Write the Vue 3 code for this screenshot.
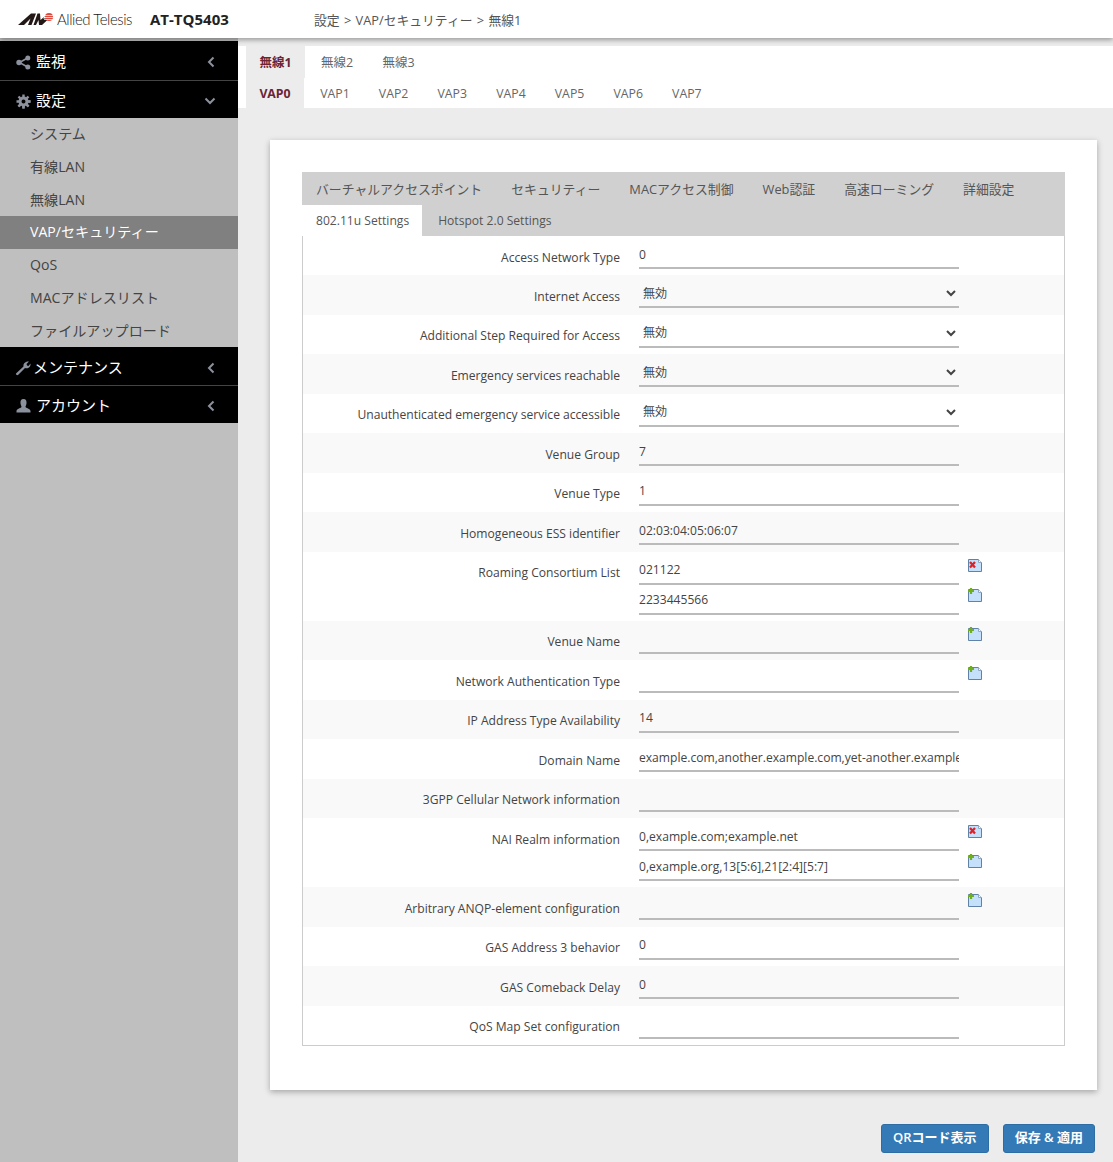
<script setup>
import { ref } from 'vue'

const subMenu = ['システム', '有線LAN', '無線LAN', 'VAP/セキュリティー', 'QoS', 'MACアドレスリスト', 'ファイルアップロード']
const radios = ['無線1', '無線2', '無線3']
const vaps = ['VAP0', 'VAP1', 'VAP2', 'VAP3', 'VAP4', 'VAP5', 'VAP6', 'VAP7']
const mainTabs = ['バーチャルアクセスポイント', 'セキュリティー', 'MACアクセス制御', 'Web認証', '高速ローミング', '詳細設定']

const activeRadio = ref(0)
const activeVap = ref(0)

const rows = [
  { label: 'Access Network Type', inputs: ['0'] },
  { label: 'Internet Access', select: true },
  { label: 'Additional Step Required for Access', select: true },
  { label: 'Emergency services reachable', select: true },
  { label: 'Unauthenticated emergency service accessible', select: true },
  { label: 'Venue Group', inputs: ['7'] },
  { label: 'Venue Type', inputs: ['1'] },
  { label: 'Homogeneous ESS identifier', inputs: ['02:03:04:05:06:07'] },
  { label: 'Roaming Consortium List', inputs: ['021122', '2233445566'], list: true },
  { label: 'Venue Name', inputs: [''], add: true },
  { label: 'Network Authentication Type', inputs: [''], add: true },
  { label: 'IP Address Type Availability', inputs: ['14'] },
  { label: 'Domain Name', inputs: ['example.com,another.example.com,yet-another.example.com'] },
  { label: '3GPP Cellular Network information', inputs: [''] },
  { label: 'NAI Realm information', inputs: ['0,example.com;example.net', '0,example.org,13[5:6],21[2:4][5:7]'], list: true },
  { label: 'Arbitrary ANQP-element configuration', inputs: [''], add: true },
  { label: 'GAS Address 3 behavior', inputs: ['0'] },
  { label: 'GAS Comeback Delay', inputs: ['0'] },
  { label: 'QoS Map Set configuration', inputs: [''] },
]

function showAdd(row, i) {
  return row.add || (row.list && i === row.inputs.length - 1)
}
</script>

<template>
  <div class="page">
    <header class="topbar">
      <div class="brand">
        <svg class="logo" width="36" height="12" viewBox="0 0 36 12">
          <path d="M0 12 L13 0.500 H18 L13.500 12 H10 L12.500 5.500 L6 12 Z" fill="#231815" />
          <path d="M15.500 12 L19.500 0.500 H22 L22.500 7 L28.500 2 L25 5.500 H31 L24 12 H21 L20.500 7 L18 12 Z" fill="#231815" />
          <circle cx="31" cy="4" r="4" fill="#e0483c" />
          <path d="M26 2.500H36M26 4.500H36M26 6.500H36" stroke="#fff" stroke-width="0.700" />
        </svg>
        <span class="brand-name">Allied Telesis</span>
      </div>
      <div class="model">AT-TQ5403</div>
      <div class="crumb">設定 &gt; VAP/セキュリティー &gt; 無線1</div>
    </header>

    <div class="body">
      <aside class="sidebar">
        <div class="menu-head first">
          <svg class="menu-icon" width="15" height="15" viewBox="0 0 15 15">
            <path d="M11.500 3 L3.500 7.500 L11.500 12" fill="none" stroke="#8c919e" stroke-width="1.600" />
            <circle cx="11.800" cy="3" r="2.500" fill="#8c919e" />
            <circle cx="3" cy="7.500" r="2.700" fill="#8c919e" />
            <circle cx="11.800" cy="12" r="2.500" fill="#8c919e" />
          </svg>
          <span class="menu-text">監視</span>
          <svg class="chev" width="10" height="12" viewBox="0 0 10 12"><path d="M7.500 1.500 L3 6 L7.500 10.500" fill="none" stroke="#8c919e" stroke-width="2" /></svg>
        </div>
        <div class="menu-head no-line">
          <svg class="menu-icon" width="15" height="15" viewBox="0 0 15 15">
            <circle cx="7.500" cy="7.500" r="3.500" fill="none" stroke="#8c919e" stroke-width="3" />
            <path d="M7.500 0.500V14.500M0.500 7.500H14.500M2.500 2.500L12.500 12.500M12.500 2.500L2.500 12.500" stroke="#8c919e" stroke-width="2.400" stroke-dasharray="2.600 9" />
            <path d="M7.500 14.500V12M14.500 7.500H12M12.500 12.500L10.700 10.700M2.500 12.500L4.300 10.700" stroke="#8c919e" stroke-width="2.400" />
          </svg>
          <span class="menu-text">設定</span>
          <svg class="chev" width="12" height="10" viewBox="0 0 12 10"><path d="M1.500 2.500 L6 7 L10.500 2.500" fill="none" stroke="#8c919e" stroke-width="2" /></svg>
        </div>
        <ul class="submenu">
          <li v-for="(item, i) in subMenu" :key="item" :class="{ active: i === 3 }">{{ item }}</li>
        </ul>
        <div class="menu-head">
          <svg class="menu-icon wrench" width="16" height="16" viewBox="0 0 16 16">
            <path d="M1 13.500 L8.500 6.500 C8 3.500 10.500 1 14 1.500 L11.500 4 L12 5.500 L13.500 6 L15.500 3.500 C16 7 13 9 10 8 L3 15 C2 15.500 0.500 14.500 1 13.500 Z" fill="#8c919e" />
          </svg>
          <span class="menu-text maint">メンテナンス</span>
          <svg class="chev" width="10" height="12" viewBox="0 0 10 12"><path d="M7.500 1.500 L3 6 L7.500 10.500" fill="none" stroke="#8c919e" stroke-width="2" /></svg>
        </div>
        <div class="menu-head no-line">
          <svg class="menu-icon user" width="15" height="15" viewBox="0 0 15 15">
            <path d="M7.500 1 C10 1 10.800 3 10.500 5.500 C10.300 7 9.500 8 9.500 9 C9.500 10 14.500 10.800 14.500 13 L14.500 14.500 L0.500 14.500 L0.500 13 C0.500 10.800 5.500 10 5.500 9 C5.500 8 4.700 7 4.500 5.500 C4.200 3 5 1 7.500 1 Z" fill="#8c919e" />
          </svg>
          <span class="menu-text">アカウント</span>
          <svg class="chev" width="10" height="12" viewBox="0 0 10 12"><path d="M7.500 1.500 L3 6 L7.500 10.500" fill="none" stroke="#8c919e" stroke-width="2" /></svg>
        </div>
      </aside>

      <main class="content">
        <nav class="strip">
          <div class="strip-row radios">
            <a v-for="(r, i) in radios" :key="r" :class="{ on: i === activeRadio }" @click="activeRadio = i">{{ r }}</a>
          </div>
          <div class="strip-row vaps">
            <a v-for="(v, i) in vaps" :key="v" :class="{ on: i === activeVap }" @click="activeVap = i">{{ v }}</a>
          </div>
        </nav>

        <section class="card">
          <div class="tabs">
            <div class="tabs-main">
              <a v-for="t in mainTabs" :key="t">{{ t }}</a>
            </div>
            <div class="tabs-sub">
              <a class="on">802.11u Settings</a>
              <a>Hotspot 2.0 Settings</a>
            </div>
          </div>
          <div class="form">
            <div v-for="row in rows" :key="row.label" class="row">
              <label class="row-label">{{ row.label }}</label>
              <div class="fields">
                <div v-if="row.select" class="field">
                  <select class="ctl sel"><option>無効</option></select>
                </div>
                <div v-else v-for="(val, i) in row.inputs" :key="i" class="field">
                  <input class="ctl" type="text" :value="val" />
                  <svg v-if="row.list && !showAdd(row, i)" class="doc" width="16" height="15" viewBox="0 0 16 15">
                    <path d="M1.500 1.500H11.500L14.500 4.500V13.500H1.500Z" fill="#c4e0fa" stroke="#5f82a6" />
                    <path d="M11.500 1.500V4.500H14.500" fill="#fff" stroke="#8fa9c4" />
                    <path d="M3 4 L8 9.500 M8 4 L3 9.500" stroke="#e01f26" stroke-width="2.300" />
                  </svg>
                  <svg v-if="showAdd(row, i)" class="doc" width="16" height="15" viewBox="0 0 16 15">
                    <path d="M1.500 1.500H11.500L14.500 4.500V13.500H1.500Z" fill="#c4e0fa" stroke="#5f82a6" />
                    <path d="M11.500 1.500V4.500H14.500" fill="#fff" stroke="#8fa9c4" />
                    <path d="M4 0V6M1 3H7" stroke="#6fae1f" stroke-width="2.200" />
                  </svg>
                </div>
              </div>
            </div>
          </div>
        </section>

        <div class="actions">
          <button type="button">QRコード表示</button>
          <button type="button">保存 &amp; 適用</button>
        </div>
      </main>
    </div>
  </div>
</template>

<style>
html, body {
  margin: 0;
  background: #ececec;
  overflow: hidden;
}
</style>

<style scoped>
.page {
  height: 1162px;
  display: flex;
  flex-direction: column;
  font-family: "Open Sans", "Noto Sans CJK JP", sans-serif;
  color: #444;
  font-size: 12.100px;
  overflow: hidden;
}

.topbar {
  height: 38px;
  flex: none;
  background: #fff;
  box-shadow: 0 2px 5px rgba(0, 0, 0, 0.35);
  display: flex;
  align-items: center;
  position: relative;
  z-index: 2;
}

.brand {
  display: flex;
  align-items: center;
  margin-left: 18px;
  width: 132px;
}

.brand-name {
  font-family: Lato, sans-serif;
  font-weight: 300;
  font-size: 15px;
  letter-spacing: -0.450px;
  color: #231815;
  margin-left: 3px;
}

.model {
  font-weight: 700;
  font-size: 15px;
  color: #222;
  width: 164px;
}

.crumb {
  font-size: 12.800px;
  word-spacing: 1px;
  color: #555;
}

.body {
  flex: 1;
  display: flex;
  min-height: 0;
}

.sidebar {
  width: 238px;
  flex: none;
  background: #bfbfbf;
  padding-top: 3px;
}

.menu-head {
  height: 38px;
  background: #000;
  border-bottom: 1px solid #444;
  display: flex;
  align-items: center;
  color: #fff;
  padding: 0 22px 0 16px;
}

.menu-head.first {
  height: 39px;
}

.menu-head.no-line {
  height: 37px;
  border-bottom: none;
}

.menu-icon {
  flex: none;
  margin-top: 4px;
}

.menu-icon.user {
  margin-top: 2px;
}

.wrench {
  margin-left: -1px;
}

.menu-text {
  flex: 1;
  margin-left: 5px;
  font-size: 15px;
}

.menu-text.maint {
  margin-left: 2px;
}

.chev {
  flex: none;
  margin-top: 3px;
}

.submenu {
  list-style: none;
  margin: 0;
  padding: 0;
}

.submenu li {
  height: 32.750px;
  line-height: 32.750px;
  padding-left: 30px;
  font-size: 14.100px;
  color: #444;
}

.submenu li.active {
  background: #808080;
  color: #fff;
}

.content {
  flex: 1;
  min-width: 0;
}

.strip {
  margin-top: 8px;
  padding-left: 8px;
  background: #fff;
  height: 62px;
}

.strip-row {
  display: flex;
}

.radios {
  height: 32px;
}

.vaps {
  height: 30px;
}

.strip-row a {
  color: #666;
  font-size: 12.300px;
  text-align: center;
  padding: 0 13px;
}

.radios a {
  line-height: 34px;
  font-size: 12.500px;
  margin-right: 2.500px;
  min-width: 33px;
}

.vaps a {
  line-height: 32px;
  min-width: 32px;
  margin-right: 0.650px;
}

.vaps a.on {
  margin-right: 2px;
}

.strip-row a.on {
  background: #ececec;
  color: #6b2337;
  font-weight: 700;
}

.card {
  margin: 32px 16px 0 32px;
  background: #fff;
  box-shadow: 0 2px 6px rgba(0, 0, 0, 0.3);
  padding: 32px 32px 44px;
}

.tabs {
  background: #d0d0d0;
  color: #555;
}

.tabs-main {
  height: 33px;
  display: flex;
  gap: 29px;
  padding-left: 14px;
  align-items: center;
  font-size: 12.850px;
}

.tabs-sub {
  height: 31px;
  display: flex;
}

.tabs-sub a {
  line-height: 31px;
  padding: 0 13px 0 14px;
}

.tabs-sub a + a {
  margin-left: 2px;
}

.tabs-sub a.on {
  background: #fff;
}

.form {
  border: 1px solid #ccc;
  border-top: none;
}

.row {
  display: flex;
  min-height: 39.470px;
  background: #fff;
}

.row:nth-child(even) {
  background: #f9f9f9;
}

.row-label {
  width: 317px;
  flex: none;
  text-align: right;
  padding-top: 12.500px;
  line-height: 18px;
  box-sizing: border-box;
}

.fields {
  margin-left: 19px;
  padding: 3px 0 6px;
}

.field {
  position: relative;
  width: 320px;
}

.ctl {
  display: block;
  width: 320px;
  height: 30px;
  box-sizing: border-box;
  border: none;
  border-bottom: 2px solid #bbb;
  background: transparent;
  padding: 2px 0 0;
  font: inherit;
  color: #444;
  outline: none;
}

.doc {
  position: absolute;
  left: 328px;
  top: 3px;
}

.actions {
  display: flex;
  justify-content: flex-end;
  gap: 14px;
  margin: 34px 18px 0 0;
}

.actions button {
  height: 29px;
  padding: 0 11px 3px;
  background: #337ab7;
  border: 1px solid #2e6da4;
  border-radius: 3px;
  color: #fff;
  font: inherit;
  font-weight: 600;
  font-size: 13px;
}
</style>
